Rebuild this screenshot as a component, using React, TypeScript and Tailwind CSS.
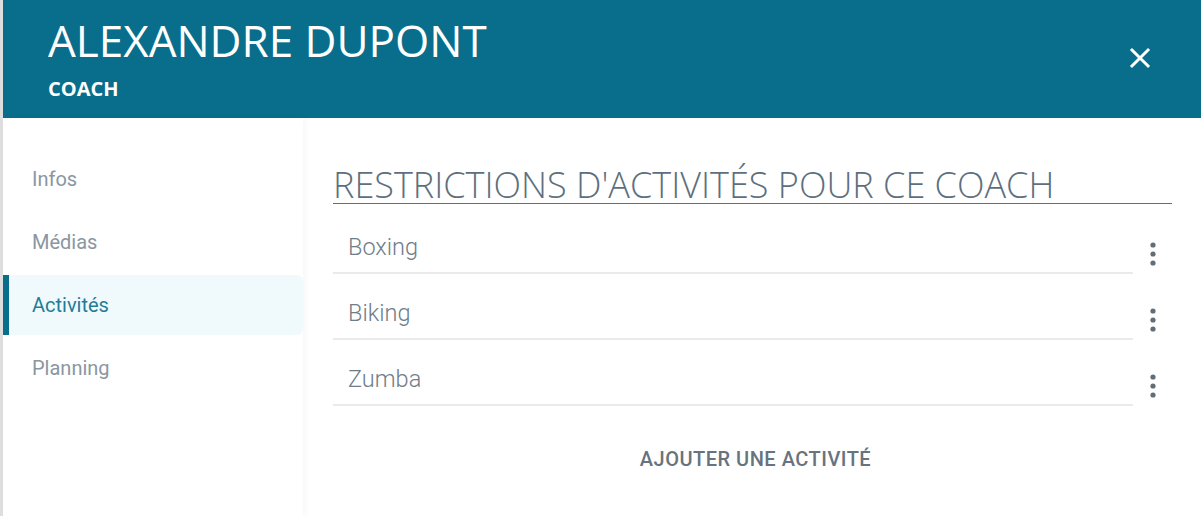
import React, { useState } from "react";

const tabs = ["Infos", "Médias", "Activités", "Planning"];

const activities = ["Boxing", "Biking", "Zumba"];

const KebabIcon = () => (
  <svg width="6" height="24" viewBox="0 0 6 24" fill="#606e7a">
    <circle cx="3" cy="3" r="2.6" />
    <circle cx="3" cy="12" r="2.6" />
    <circle cx="3" cy="21" r="2.6" />
  </svg>
);

const App = () => {
  const [active, setActive] = useState("Activités");

  return (
    <div className="flex w-[1201px] h-[516px] overflow-hidden bg-white">
      <div className="w-[3px] bg-[#dedede]" />

      <div className="flex-1 flex flex-col">
        <header className="h-[118px] shrink-0 bg-[#086e8c] flex items-start justify-between pl-[45px] pr-[49px] font-['Open_Sans',sans-serif] text-white">
          <div className="pt-[14px]">
            <h1 className="text-[44px] leading-[52px] font-normal">ALEXANDRE DUPONT</h1>
            <p className="text-[20px] leading-[26px] font-bold mt-[10px]">COACH</p>
          </div>

          <button className="mt-[46px] w-6 h-6 flex items-center justify-center">
            <svg width="22" height="22" viewBox="0 0 22 22" stroke="white" strokeWidth="3" strokeLinecap="square">
              <line x1="3" y1="3" x2="19" y2="19" />
              <line x1="19" y1="3" x2="3" y2="19" />
            </svg>
          </button>
        </header>

        <div className="flex flex-1">
          <nav className="w-[300px] pt-[31px] flex flex-col gap-[3px] shadow-[3px_0_6px_rgba(0,0,0,0.03)] font-['Roboto',sans-serif]">
            {tabs.map((tab) => (
              <button
                key={tab}
                onClick={() => setActive(tab)}
                className={
                  tab === active
                    ? "h-[60px] flex items-center pl-[23px] text-left text-[20px] text-[#1f7d99] bg-[#f0f9fc] border-l-[6px] border-[#086e8c] rounded-r-[6px]"
                    : "h-[60px] flex items-center pl-[29px] text-left text-[20px] text-[#8a96a1]"
                }
              >
                {tab}
              </button>
            ))}
          </nav>

          <main className="flex-1 pl-[30px] pr-[29px] pt-[49px]">
            <h2 className="font-['Open_Sans',sans-serif] font-light text-[36px] leading-[36px] text-[#5d6f7e] border-b-[1.5px] border-[#5d6f7e]">
              RESTRICTIONS D'ACTIVITÉS POUR CE COACH
            </h2>

            <ul className="font-['Roboto',sans-serif] mt-[4px]">
              {activities.map((activity) => (
                <li key={activity} className="flex h-[66px]">
                  <div className="flex-1 flex items-center pl-[15px] pt-[15px] border-b-2 border-[#e8eaec] text-[23.5px] font-light text-[#6f7d89]">
                    {activity}
                  </div>
                  <div className="w-[39px] flex items-center justify-center pt-[26px]">
                    <KebabIcon />
                  </div>
                </li>
              ))}
            </ul>

            <div className="flex justify-center mt-[41px] pl-[6px]">
              <button className="font-['Roboto',sans-serif] font-medium text-[20px] leading-[24px] text-[#67737e] tracking-[0.5px]">
                AJOUTER UNE ACTIVITÉ
              </button>
            </div>
          </main>
        </div>
      </div>
    </div>
  );
};

export default App;
